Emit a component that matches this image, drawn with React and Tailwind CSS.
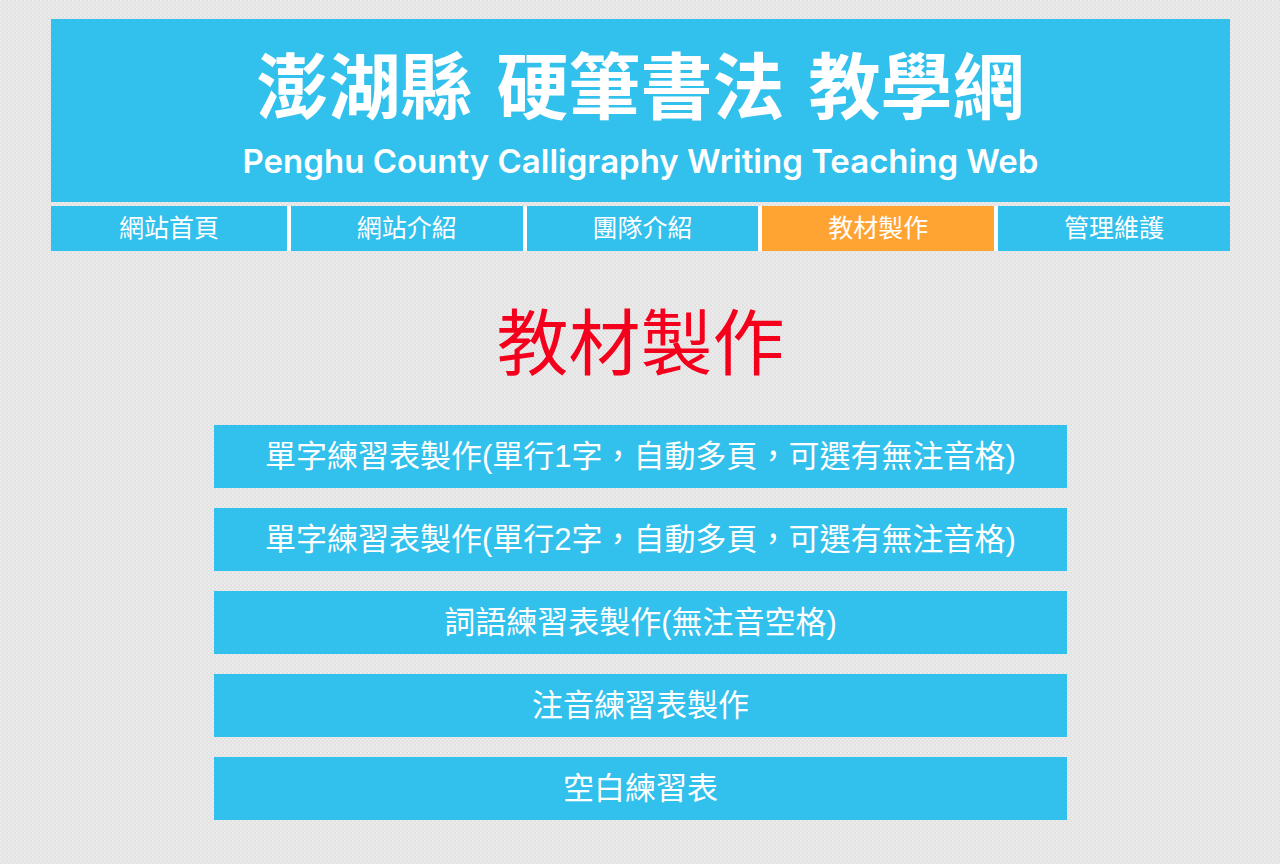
const titleWords = ["澎湖縣", "硬筆書法", "教學網"];

const navLinks = [
  { label: "網站首頁" },
  { label: "網站介紹" },
  { label: "團隊介紹" },
  { label: "教材製作", active: true },
  { label: "管理維護" },
];

const materials = [
  "單字練習表製作(單行1字，自動多頁，可選有無注音格)",
  "單字練習表製作(單行2字，自動多頁，可選有無注音格)",
  "詞語練習表製作(無注音空格)",
  "注音練習表製作",
  "空白練習表",
];

export default function App() {
  return (
    <div
      lang="zh-TW"
      className="min-h-screen bg-[#e6e6e6] bg-[conic-gradient(#e1e1e1_25%,#eaeaea_0_50%,#e3e3e3_0_75%,#ececec_0)] bg-size-[4px_4px] pt-[19px] pr-[50px] pb-[44px] pl-[51px] font-['Liberation_Sans','Noto_Sans_CJK_TC',sans-serif] text-white"
    >
      <header className="bg-[#32c0ec] pt-4 pb-4 text-center">
        <h1 className="flex flex-wrap justify-center gap-x-6 font-['Noto_Sans_CJK_TC',sans-serif] text-[72px] leading-[94px] font-bold">
          {titleWords.map((word) => (
            <span key={word}>{word}</span>
          ))}
        </h1>
        <p className="mt-2 font-['Inter',sans-serif] text-[33px] leading-[49px] font-semibold">
          Penghu County Calligraphy Writing Teaching Web
        </p>
      </header>

      <nav className="mt-1 grid grid-cols-5">
        {navLinks.map(({ label, active }) => (
          <a
            key={label}
            href="#"
            aria-current={active ? "page" : undefined}
            className={`border-white text-center text-[25px] leading-[45px] not-first:border-l-4 ${
              active ? "bg-[#ffa333]" : "bg-[#32c0ec]"
            }`}
          >
            {label}
          </a>
        ))}
      </nav>

      <main className="mt-12">
        <h2 className="text-center text-[72px] leading-[90px] text-[#f4001c]">教材製作</h2>
        <ul className="mx-auto mt-9 flex w-[853px] max-w-full flex-col gap-5">
          {materials.map((label) => (
            <li key={label}>
              <a href="#" className="block bg-[#32c0ec] text-center text-[31px] leading-[63px]">
                {label}
              </a>
            </li>
          ))}
        </ul>
      </main>
    </div>
  );
}
